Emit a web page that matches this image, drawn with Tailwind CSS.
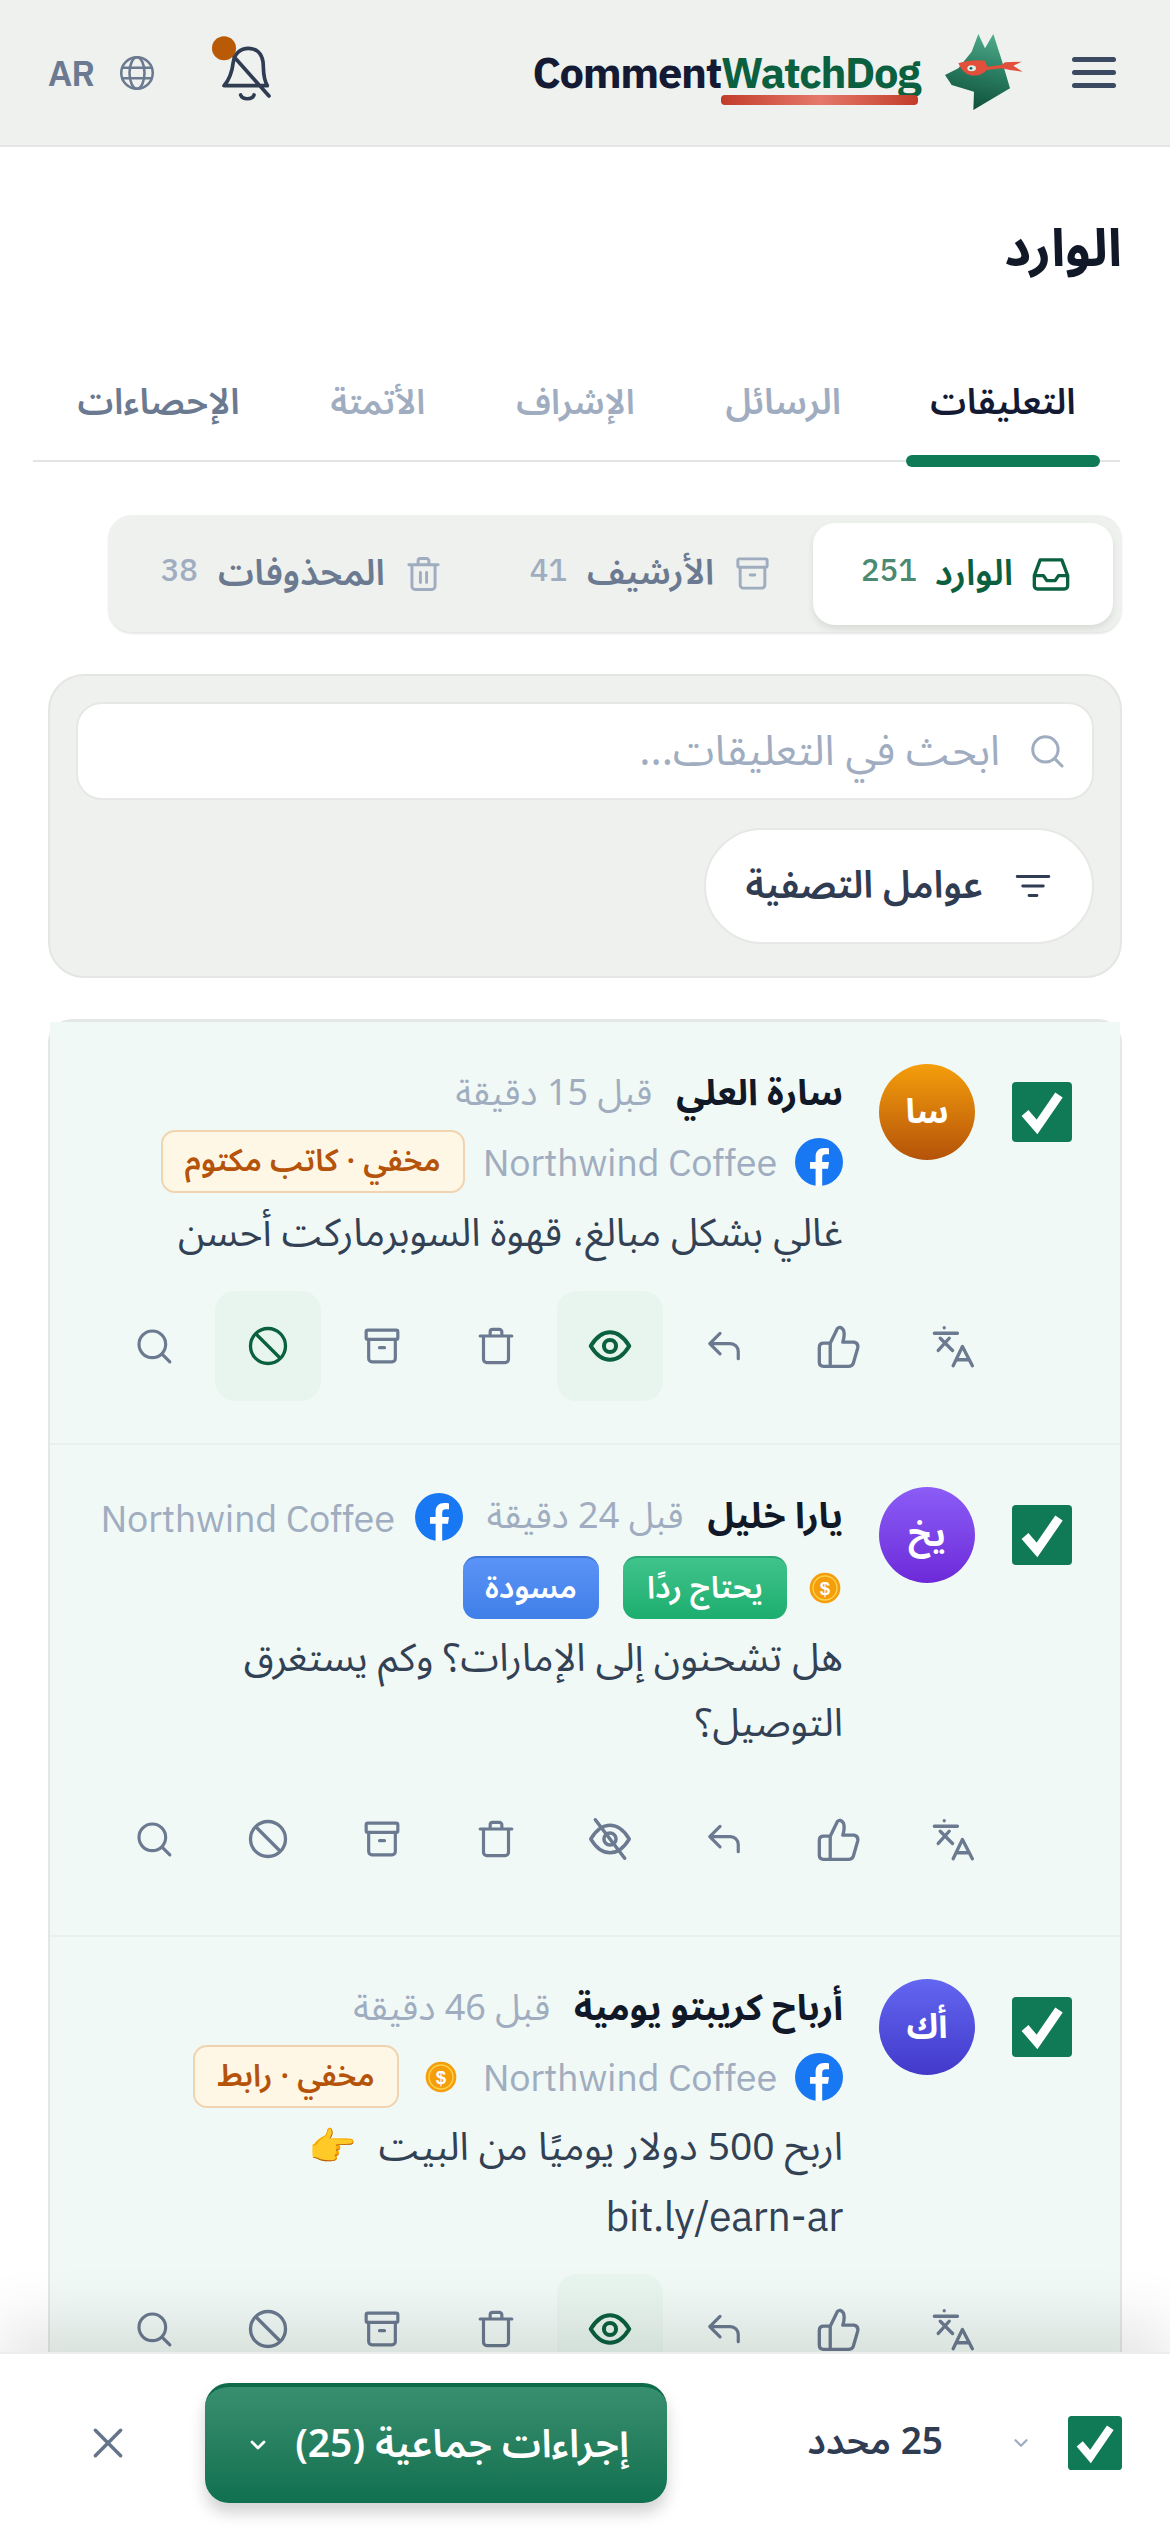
<!DOCTYPE html>
<html lang="ar" dir="rtl">
<head>
<meta charset="utf-8">
<script src="https://cdn.jsdelivr.net/npm/@tailwindcss/browser@4"></script>
</head>
<body class="bg-white">
<svg width="0" height="0" class="absolute">
<defs>
<linearGradient id="dogg" x1="0.6" y1="0" x2="0.4" y2="1"><stop offset="0" stop-color="#4fa98a"/><stop offset="0.45" stop-color="#2a7f62"/><stop offset="1" stop-color="#0f4f3a"/></linearGradient>
<symbol id="search" viewBox="0 0 24 24"><circle cx="11" cy="11" r="8" fill="none" stroke="currentColor" stroke-width="1.900"/><path d="M17 17 21.500 21.500" fill="none" stroke="currentColor" stroke-width="1.900" stroke-linecap="round"/></symbol>
<symbol id="ban" viewBox="0 0 24 24"><circle cx="12" cy="12" r="10" fill="none" stroke="currentColor" stroke-width="1.900"/><path d="M5 5 19 19" fill="none" stroke="currentColor" stroke-width="1.900"/></symbol>
<symbol id="archive" viewBox="0 0 24 24"><g fill="none" stroke="currentColor" stroke-width="1.900" stroke-linejoin="round" stroke-linecap="round"><rect x="2.500" y="2.500" width="19" height="5.500" rx="1"/><path d="M4 8v11.500a2 2 0 0 0 2 2h12a2 2 0 0 0 2-2V8M10.500 13h3"/></g></symbol>
<symbol id="trash" viewBox="0 0 24 24"><g fill="none" stroke="currentColor" stroke-width="1.900" stroke-linejoin="round" stroke-linecap="round"><path d="M2.500 6h19M8.500 6V3.500a1.500 1.500 0 0 1 1.500-1.500h4a1.500 1.500 0 0 1 1.500 1.500V6M4.500 6v14a2 2 0 0 0 2 2h11a2 2 0 0 0 2-2V6"/></g></symbol>
<symbol id="trash2" viewBox="0 0 24 24"><g fill="none" stroke="currentColor" stroke-width="1.900" stroke-linejoin="round" stroke-linecap="round"><path d="M2.500 6h19M8.500 6V3.500a1.500 1.500 0 0 1 1.500-1.500h4a1.500 1.500 0 0 1 1.500 1.500V6M4.500 6v14a2 2 0 0 0 2 2h11a2 2 0 0 0 2-2V6M10 11v6.500M14 11v6.500"/></g></symbol>
<symbol id="eye" viewBox="0 0 24 24"><g fill="none" stroke="currentColor" stroke-width="2.200" stroke-linejoin="round"><path d="M1.500 12C4.500 7 8 4.500 12 4.500S19.500 7 22.500 12c-3 5-6.500 7.500-10.500 7.500S4.500 17 1.500 12Z"/><circle cx="12" cy="12" r="3.300"/></g></symbol>
<symbol id="eyeoff" viewBox="0 0 24 24"><g fill="none" stroke="currentColor" stroke-width="1.900" stroke-linejoin="round" stroke-linecap="round"><path d="M1.500 12C4.500 7 8 4.500 12 4.500S19.500 7 22.500 12c-3 5-6.500 7.500-10.500 7.500S4.500 17 1.500 12Z"/><circle cx="12" cy="12" r="3.300"/><path d="M4 1.500 20 22.500"/></g></symbol>
<symbol id="reply" viewBox="0 0 24 24"><path d="M9.500 4 3 10.500 9.500 17M4 10.500h12a5 5 0 0 1 5 5V20" fill="none" stroke="currentColor" stroke-width="2" stroke-linecap="round" stroke-linejoin="round"/></symbol>
<symbol id="thumb" viewBox="110 110 130 130"><path d="M150 165 L172 120 Q180 112 190 125 Q195 140 188 162 L222 162 Q236 165 233 180 L220 225 Q216 235 205 235 H130 Q117 235 117 222 V178 Q117 165 130 165 H150 V235" fill="none" stroke="currentColor" stroke-width="10" stroke-linejoin="round" stroke-linecap="round"/></symbol>
<symbol id="lang" viewBox="450 110 130 130"><g fill="none" stroke="currentColor" stroke-width="10" stroke-linecap="round" stroke-linejoin="round"><path d="M460 135H530M490 118v.5M478 150 515 187M505 150 472 187M517 233 545 175 575 233M526 215H566"/></g></symbol>
<symbol id="fb" viewBox="0 0 24 24"><circle cx="12" cy="12" r="12" fill="#1877f2"/><path d="M13.600 24v-8.600h2.900l.5-3.400h-3.400V9.900c0-1 .4-1.800 1.900-1.800H17V5.200c-.5-.1-1.400-.2-2.400-.2-2.600 0-4.300 1.500-4.300 4.400V12H7.500v3.400h2.800V24z" fill="#fff"/></symbol>
<symbol id="coin" viewBox="0 0 24 24"><circle cx="12" cy="12" r="11.500" fill="#f59e0b"/><circle cx="12" cy="12" r="9" fill="none" stroke="#fcd34d" stroke-width="1"/><text x="12" y="17" font-size="14" font-weight="700" text-anchor="middle" fill="#fff" font-family="Liberation Sans">$</text></symbol>
<symbol id="check" viewBox="0 0 60 60"><rect width="60" height="60" rx="4" fill="#107a57"/><path d="M13 31 25 45 47 13" fill="none" stroke="#fff" stroke-width="9"/></symbol>
</defs>
</svg>

<div class="relative w-[1170px] h-[2532px] overflow-hidden font-['Noto_Sans_Arabic','IBM_Plex_Sans_Arabic','Noto_Sans','DejaVu_Sans',sans-serif]">

<header class="h-[147px] bg-[#eef1ed] border-b-2 border-[#e4e6e3] flex items-center pr-[54px] pl-[48px]">
  <div class="w-[44px] flex flex-col gap-[8px] shrink-0">
    <span class="h-[5px] rounded bg-[#3b4a60]"></span><span class="h-[5px] rounded bg-[#3b4a60]"></span><span class="h-[5px] rounded bg-[#3b4a60]"></span>
  </div>
  <svg class="w-[110px] h-[100px] mr-[32px] -mt-[6px] shrink-0" viewBox="0 0 330 300">
    <path d="M145 42 165 85 190 42 215 120 240 205 130 270 132 215 65 195 45 165 85 145 125 95Z" fill="url(#dogg)"/>
    <path d="M85 130Q120 118 165 122L172 140 215 135 225 127 275 125 250 137 278 155 240 150 215 145 170 150Q150 172 120 165 98 160 85 130Z" fill="#e2503c"/>
    <ellipse cx="125" cy="145" rx="13" ry="9" fill="#dcefe7"/><circle cx="123" cy="145" r="4" fill="#1d5f49"/>
  </svg>
  <div class="relative mr-[10px] text-[43.500px] leading-[50px] font-bold tracking-[-1.300px] font-['IBM_Plex_Sans','Inter',sans-serif] text-[#141a33] -mt-[2px]" dir="ltr">
    Comment<span class="text-[#0b6040]">WatchDog</span>
    <span class="absolute left-[188px] right-[2px] top-[48px] h-[10px] rounded bg-linear-to-r from-[#c23b2a] via-[#e5786a] to-[#c23b2a]"></span>
  </div>
  <div class="flex-1"></div>
  <svg class="w-[100px] h-[100px] ml-[44px] -mt-[6px] shrink-0" viewBox="0 0 300 300" fill="none" stroke="#2f3c52" stroke-width="11" stroke-linecap="round" stroke-linejoin="round">
    <path d="M75 197H205C190 170 195 150 192 125 188 100 172 85 148 85 125 85 107 100 103 125 100 150 95 175 75 197ZM125 225C130 240 160 240 165 225M105 110 210 228"/>
    <circle cx="75" cy="85" r="36" fill="#b85a06" stroke="none"/>
  </svg>
  <svg class="w-[36px] h-[36px] ml-[25px] text-[#6b7a90] shrink-0" viewBox="0 0 24 24" fill="none" stroke="currentColor" stroke-width="1.700"><circle cx="12" cy="12" r="10.500"/><ellipse cx="12" cy="12" rx="5" ry="10.500"/><path d="M2 8.500h20M2 15.500h20"/></svg>
  <span class="text-[36px] font-semibold text-[#6b7a90] font-['IBM_Plex_Sans','Inter',sans-serif] tracking-[-1px]">AR</span>
</header>

<h1 class="h-[100px] mt-[53px] pr-[48px] text-[52px] leading-[100px] font-bold text-[#111827]">الوارد</h1>

<nav class="ml-[33px] mr-[50px] pr-[20px] mt-[76px] h-[86px] flex items-start gap-[91px] border-b-2 border-[#e3e5e4] text-[36px] leading-[54px] font-semibold whitespace-nowrap">
  <div class="relative h-[86px] text-[#141a33] w-[194px] text-center -ml-[26px]">التعليقات<span class="absolute inset-x-0 bottom-[-5px] h-[12px] rounded-full bg-[#107a57]"></span></div>
  <div class="text-[#a0adc0]">الرسائل</div>
  <div class="text-[#a0adc0] text-[34.500px]">الإشراف</div>
  <div class="text-[#a0adc0] text-[34.500px]">الأتمتة</div>
  <div class="text-[#6b7a90]">الإحصاءات</div>
</nav>

<div class="mr-[48px] ml-[108px] mt-[53px] h-[117px] bg-[#eef1ed] rounded-[24px] p-[9px] flex items-center shadow-[0_2px_2px_#e6e8e5] whitespace-nowrap">
  <div class="w-[300px] h-[102px] bg-white rounded-[22px] shadow-[0_4px_6px_#d9dcd8] flex items-center pr-[42px] gap-[18px] text-[#0b6040] text-[36px] font-semibold shrink-0">
    <svg class="w-[40px] h-[40px] shrink-0" viewBox="0 0 24 24" fill="none" stroke="currentColor" stroke-width="2" stroke-linejoin="round"><path d="M2 13l3.500-9.500h13L22 13v6a2 2 0 0 1-2 2H4a2 2 0 0 1-2-2zM2 13h5.500l2 3h5l2-3H22"/></svg>
    <span>الوارد</span>
    <span class="text-[31px] font-medium text-[#4a8a72] font-['IBM_Plex_Sans','Inter',sans-serif] -mt-[6px]">251</span>
  </div>
  <div class="flex items-center mr-[42px] gap-[20px] text-[#6b7a90] text-[35px] font-semibold">
    <svg class="w-[37px] h-[37px] text-[#a0adc0] shrink-0"><use href="#archive"/></svg>
    <span>الأرشيف</span>
    <span class="text-[31px] font-medium text-[#a0adc0] font-['IBM_Plex_Sans','Inter',sans-serif] -mt-[6px]">41</span>
  </div>
  <div class="flex items-center mr-[88px] gap-[20px] text-[#6b7a90] text-[36px] font-semibold">
    <svg class="w-[37px] h-[38px] text-[#a0adc0] shrink-0"><use href="#trash2"/></svg>
    <span>المحذوفات</span>
    <span class="text-[31px] font-medium text-[#a0adc0] font-['IBM_Plex_Sans','Inter',sans-serif] -mt-[6px]">38</span>
  </div>
</div>

<section class="mx-[48px] mt-[42px] h-[304px] bg-[#eef1ed] rounded-[36px] border-2 border-[#e4e6e3] p-[26px]">
  <div class="h-[98px] bg-white rounded-[26px] border-2 border-[#e6e8e5] flex items-center gap-[28px] pr-[26px] text-[42px] text-[#a0adc0]">
    <svg class="w-[38px] h-[38px]"><use href="#search"/></svg>
    <span>ابحث في التعليقات...</span>
  </div>
  <div class="mt-[28px] w-[390px] h-[116px] bg-white rounded-full border-2 border-[#e6e8e5] flex items-center gap-[29px] pr-[38px] text-[38px] font-semibold text-[#2f3c52]">
    <svg class="w-[42px] h-[38px]" viewBox="0 0 24 24" fill="none" stroke="currentColor" stroke-width="1.800" stroke-linecap="round"><path d="M2 6h20M5.500 12h13M9.500 18h5"/></svg>
    <span>عوامل التصفية</span>
  </div>
</section>

<section class="mx-[48px] mt-[41px] border-x-2 border-t-[3px] border-[#e3e8e5] rounded-t-[24px]">

  <article class="bg-[#f0f9f5] pt-[42px] pb-[42px] border-b-2 border-[#e9f1ed]">
    <div class="flex items-start pr-[48px]">
      <svg class="w-[60px] h-[60px] mt-[18px] shrink-0"><use href="#check"/></svg>
      <div class="w-[96px] h-[96px] mr-[37px] rounded-full bg-linear-to-b from-[#f59e0b] to-[#b45309] shrink-0 flex items-center justify-center text-white text-[34px] font-bold">سا</div>
      <div class="mr-[36px] flex-1">
        <div class="flex items-center gap-[24px] h-[60px]"><b class="text-[36px] font-bold text-[#111827]">سارة العلي</b><span class="text-[36px] text-[#a0adc0]">قبل 15 دقيقة</span></div>
        <div class="flex items-center gap-[18px] mt-[6px] h-[63px]">
          <svg class="w-[48px] h-[48px] shrink-0"><use href="#fb"/></svg>
          <span class="text-[38px] tracking-[-0.300px] text-[#a0adc0] font-['IBM_Plex_Sans','Inter',sans-serif]">Northwind Coffee</span>
          <span class="h-[63px] px-[22px] rounded-[14px] border-2 border-[#f0d4b0] bg-[#fff7e6] text-[#b45309] text-[31px] font-semibold flex items-center">مخفي · كاتب مكتوم</span>
        </div>
        <p class="mt-[8px] text-[39px] leading-[65px] text-[#334155] whitespace-nowrap">غالي بشكل مبالغ، قهوة السوبرماركت أحسن</p>
      </div>
    </div>
    <div class="flex gap-[8px] mr-[115px] mt-[25px] text-[#6b7a90]">
      <div class="w-[106px] h-[110px] flex items-center justify-center"><svg class="w-[43px] h-[43px]"><use href="#lang"/></svg></div>
      <div class="w-[106px] h-[110px] flex items-center justify-center"><svg class="w-[43px] h-[43px]"><use href="#thumb"/></svg></div>
      <div class="w-[106px] h-[110px] flex items-center justify-center"><svg class="w-[38px] h-[38px]"><use href="#reply"/></svg></div>
      <div class="w-[106px] h-[110px] rounded-[20px] bg-[#e8f5ee] text-[#0b6040] flex items-center justify-center"><svg class="w-[44px] h-[44px]"><use href="#eye"/></svg></div>
      <div class="w-[106px] h-[110px] flex items-center justify-center"><svg class="w-[40px] h-[40px]"><use href="#trash"/></svg></div>
      <div class="w-[106px] h-[110px] flex items-center justify-center"><svg class="w-[40px] h-[40px]"><use href="#archive"/></svg></div>
      <div class="w-[106px] h-[110px] rounded-[20px] bg-[#e8f5ee] text-[#0b6040] flex items-center justify-center"><svg class="w-[42px] h-[42px]"><use href="#ban"/></svg></div>
      <div class="w-[106px] h-[110px] flex items-center justify-center"><svg class="w-[40px] h-[40px]"><use href="#search"/></svg></div>
    </div>
  </article>

  <article class="bg-[#f0f9f5] pt-[42px] pb-[41px] border-b-2 border-[#e9f1ed]">
    <div class="flex items-start pr-[48px]">
      <svg class="w-[60px] h-[60px] mt-[18px] shrink-0"><use href="#check"/></svg>
      <div class="w-[96px] h-[96px] mr-[37px] rounded-full bg-linear-to-b from-[#8b5cf6] to-[#6d28d9] shrink-0 flex items-center justify-center text-white text-[34px] font-bold">يخ</div>
      <div class="mr-[36px] flex-1 min-w-0">
        <div class="flex items-center gap-[24px] h-[60px] whitespace-nowrap"><b class="text-[36px] font-bold text-[#111827]">يارا خليل</b><span class="text-[36px] text-[#a0adc0]">قبل 24 دقيقة</span>
          <svg class="w-[48px] h-[48px] shrink-0"><use href="#fb"/></svg>
          <span class="text-[38px] tracking-[-0.300px] -mr-[4px] text-[#a0adc0] font-['IBM_Plex_Sans','Inter',sans-serif]">Northwind Coffee</span></div>
        <div class="flex items-center gap-[22px] mt-[9px] h-[63px]">
          <svg class="w-[32px] h-[32px] mr-[2px] shrink-0"><use href="#coin"/></svg>
          <span class="h-[63px] px-[24px] rounded-[14px] bg-linear-to-b from-[#3fc48c] to-[#1bad6e] border-t-2 border-[#2aa876] text-white text-[31px] font-semibold flex items-center">يحتاج ردًا</span>
          <span class="h-[63px] mr-[2px] px-[22px] rounded-[14px] bg-linear-to-b from-[#5b93f7] to-[#3f7fe8] border-t-2 border-[#3f78d8] text-white text-[31px] font-semibold flex items-center">مسودة</span>
        </div>
        <p class="mt-[7px] text-[39px] leading-[65px] text-[#334155] w-[690px]">هل تشحنون إلى الإمارات؟ وكم يستغرق التوصيل؟</p>
      </div>
    </div>
    <div class="flex gap-[8px] mr-[115px] mt-[28px] text-[#6b7a90]">
      <div class="w-[106px] h-[110px] flex items-center justify-center"><svg class="w-[43px] h-[43px]"><use href="#lang"/></svg></div>
      <div class="w-[106px] h-[110px] flex items-center justify-center"><svg class="w-[43px] h-[43px]"><use href="#thumb"/></svg></div>
      <div class="w-[106px] h-[110px] flex items-center justify-center"><svg class="w-[38px] h-[38px]"><use href="#reply"/></svg></div>
      <div class="w-[106px] h-[110px] flex items-center justify-center"><svg class="w-[44px] h-[44px]"><use href="#eyeoff"/></svg></div>
      <div class="w-[106px] h-[110px] flex items-center justify-center"><svg class="w-[40px] h-[40px]"><use href="#trash"/></svg></div>
      <div class="w-[106px] h-[110px] flex items-center justify-center"><svg class="w-[40px] h-[40px]"><use href="#archive"/></svg></div>
      <div class="w-[106px] h-[110px] flex items-center justify-center"><svg class="w-[42px] h-[42px]"><use href="#ban"/></svg></div>
      <div class="w-[106px] h-[110px] flex items-center justify-center"><svg class="w-[40px] h-[40px]"><use href="#search"/></svg></div>
    </div>
  </article>

  <article class="bg-[#f0f9f5] pt-[42px] pb-[42px]">
    <div class="flex items-start pr-[48px]">
      <svg class="w-[60px] h-[60px] mt-[18px] shrink-0"><use href="#check"/></svg>
      <div class="w-[96px] h-[96px] mr-[37px] rounded-full bg-linear-to-b from-[#6366f1] to-[#4338ca] shrink-0 flex items-center justify-center text-white text-[34px] font-bold">أك</div>
      <div class="mr-[36px] flex-1">
        <div class="flex items-center gap-[24px] h-[60px]"><b class="text-[36px] font-bold text-[#111827]">أرباح كريبتو يومية</b><span class="text-[36px] text-[#a0adc0]">قبل 46 دقيقة</span></div>
        <div class="flex items-center gap-[18px] mt-[6px] h-[63px]">
          <svg class="w-[48px] h-[48px] shrink-0"><use href="#fb"/></svg>
          <span class="text-[38px] tracking-[-0.300px] text-[#a0adc0] font-['IBM_Plex_Sans','Inter',sans-serif]">Northwind Coffee</span>
          <svg class="w-[32px] h-[32px] mr-[8px] shrink-0"><use href="#coin"/></svg>
          <span class="h-[63px] mr-[8px] px-[22px] rounded-[14px] border-2 border-[#f0d4b0] bg-[#fff7e6] text-[#b45309] text-[31px] font-semibold flex items-center">مخفي · رابط</span>
        </div>
        <p class="mt-[6px] text-[39px] leading-[68px] text-[#334155]">اربح 500 دولار يوميًا من البيت <span class="mr-[12px]">👉</span><br><span class="text-[41px] tracking-[-0.300px] font-['IBM_Plex_Sans','Inter',sans-serif]">bit.ly/earn-ar</span></p>
      </div>
    </div>
    <div class="flex gap-[8px] mr-[115px] mt-[21px] text-[#6b7a90]">
      <div class="w-[106px] h-[110px] flex items-center justify-center"><svg class="w-[43px] h-[43px]"><use href="#lang"/></svg></div>
      <div class="w-[106px] h-[110px] flex items-center justify-center"><svg class="w-[43px] h-[43px]"><use href="#thumb"/></svg></div>
      <div class="w-[106px] h-[110px] flex items-center justify-center"><svg class="w-[38px] h-[38px]"><use href="#reply"/></svg></div>
      <div class="w-[106px] h-[110px] rounded-[20px] bg-[#e8f5ee] text-[#0b6040] flex items-center justify-center"><svg class="w-[44px] h-[44px]"><use href="#eye"/></svg></div>
      <div class="w-[106px] h-[110px] flex items-center justify-center"><svg class="w-[40px] h-[40px]"><use href="#trash"/></svg></div>
      <div class="w-[106px] h-[110px] flex items-center justify-center"><svg class="w-[40px] h-[40px]"><use href="#archive"/></svg></div>
      <div class="w-[106px] h-[110px] flex items-center justify-center"><svg class="w-[42px] h-[42px]"><use href="#ban"/></svg></div>
      <div class="w-[106px] h-[110px] flex items-center justify-center"><svg class="w-[40px] h-[40px]"><use href="#search"/></svg></div>
    </div>
  </article>
</section>

<div class="absolute inset-x-0 bottom-0 h-[180px] bg-white border-t-2 border-[#eceeed] shadow-[0_-30px_60px_rgba(0,0,0,0.10)] flex items-center pr-[48px]">
  <svg class="w-[54px] h-[54px] shrink-0"><use href="#check"/></svg>
  <svg class="w-[22px] h-[22px] mr-[36px] text-[#a0adc0] shrink-0" viewBox="0 0 24 24" fill="none" stroke="currentColor" stroke-width="2.500" stroke-linecap="round" stroke-linejoin="round"><path d="M6 9l6 6 6-6"/></svg>
  <span class="mr-[67px] w-[140px] text-[37px] font-semibold text-[#2f3c52] whitespace-nowrap shrink-0">25 محدد</span>
  <div class="mr-[136px] w-[462px] h-[120px] shrink-0 rounded-[24px] bg-linear-to-b from-[#388f6f] to-[#0f7050] border-t-4 border-[#0f6a4c] shadow-[0_10px_16px_rgba(0,0,0,0.18)] flex items-center justify-between pr-[38px] pl-[41px] text-white text-[39px] font-semibold whitespace-nowrap">
    <span>إجراءات جماعية (25)</span>
    <svg class="w-[24px] h-[24px] shrink-0" viewBox="0 0 24 24" fill="none" stroke="currentColor" stroke-width="2.800" stroke-linecap="round" stroke-linejoin="round"><path d="M6 9l6 6 6-6"/></svg>
  </div>
  <svg class="w-[38px] h-[38px] mr-[78px] text-[#64748b] shrink-0" viewBox="0 0 24 24" fill="none" stroke="currentColor" stroke-width="2.200" stroke-linecap="round"><path d="M4 4l16 16M20 4 4 20"/></svg>
</div>

</div>
</body>
</html>
